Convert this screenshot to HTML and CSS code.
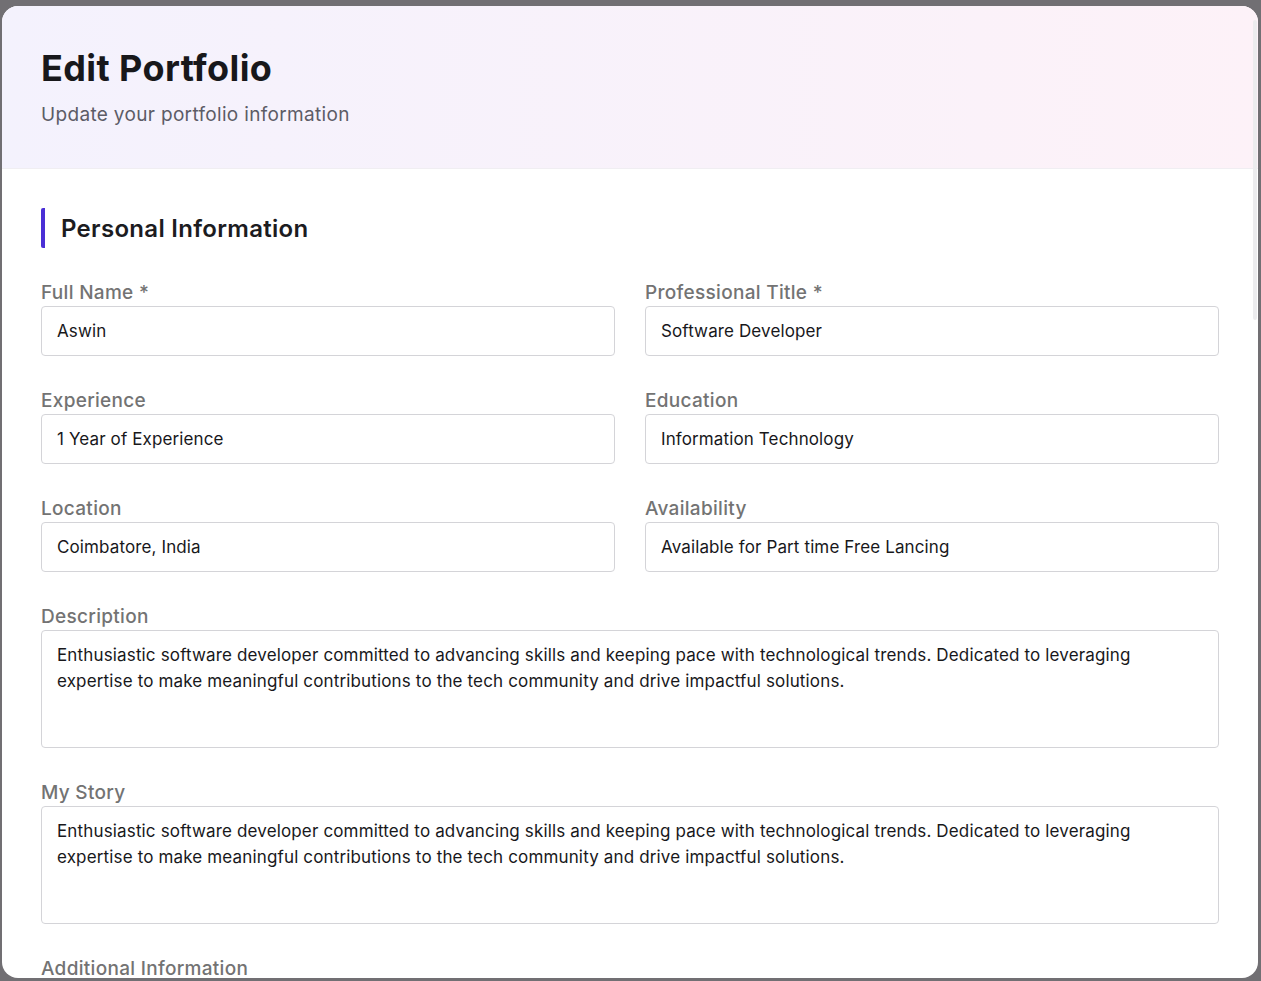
FILE: index.html
```html
<!DOCTYPE html>
<html lang="en">
<head>
<meta charset="utf-8">
<title>Edit Portfolio</title>
<link rel="stylesheet" href="styles.css">
</head>
<body>
<div class="overlay">
  <div class="modal">
    <div class="scroll-thumb"></div>
    <header class="modal-header">
      <h1 class="title">Edit Portfolio</h1>
      <p class="subtitle">Update your portfolio information</p>
    </header>
    <div class="modal-body">
      <h2 class="section-title">Personal Information</h2>
      <div class="grid">
        <div class="field">
          <label class="label">Full Name *</label>
          <div class="input">Aswin</div>
        </div>
        <div class="field">
          <label class="label">Professional Title *</label>
          <div class="input">Software Developer</div>
        </div>
        <div class="field">
          <label class="label">Experience</label>
          <div class="input">1 Year of Experience</div>
        </div>
        <div class="field">
          <label class="label">Education</label>
          <div class="input">Information Technology</div>
        </div>
        <div class="field">
          <label class="label">Location</label>
          <div class="input">Coimbatore, India</div>
        </div>
        <div class="field">
          <label class="label">Availability</label>
          <div class="input">Available for Part time Free Lancing</div>
        </div>
      </div>
      <div class="field">
        <label class="label">Description</label>
        <div class="textarea">Enthusiastic software developer committed to advancing skills and keeping pace with technological trends. Dedicated to leveraging expertise to make meaningful contributions to the tech community and drive impactful solutions.</div>
      </div>
      <div class="field">
        <label class="label">My Story</label>
        <div class="textarea">Enthusiastic software developer committed to advancing skills and keeping pace with technological trends. Dedicated to leveraging expertise to make meaningful contributions to the tech community and drive impactful solutions.</div>
      </div>
      <div class="field">
        <label class="label">Additional Information</label>
        <div class="textarea"></div>
      </div>
    </div>
  </div>
</div>
</body>
</html>
```

FILE: styles.css
```css
* { box-sizing: border-box; }
html, body { margin: 0; padding: 0; height: 100%; }
body {
  background: #716f73;
  font-family: Inter, "Noto Sans", sans-serif;
  overflow: hidden;
}
.overlay {
  padding: 6px 3px 3px 2px;
  height: 981px;
}
.modal {
  position: relative;
  width: 1256px;
  height: 972px;
  background: #ffffff;
  border-radius: 16px;
  overflow: hidden;
}
.scroll-thumb {
  position: absolute;
  right: 1px;
  top: 14px;
  width: 4px;
  height: 300px;
  background: #ececee;
  border-radius: 2px;
}
.modal-header {
  padding: 42px 39px 39px;
  background: linear-gradient(90deg, #f4f2fd 0%, #fdf2f8 100%);
  border-bottom: 1px solid #f0eef2;
}
.title {
  margin: 0;
  font-size: 36px;
  line-height: 40px;
  font-weight: 700;
  color: #18181b;
  letter-spacing: 0.4px;
}
.subtitle {
  margin: 13px 0 0;
  font-size: 19px;
  line-height: 28px;
  color: #5c5c66;
  letter-spacing: 0.33px;
}
.modal-body {
  padding: 39px 39px 40px;
}
.section-title {
  margin: 0 0 30px;
  height: 40px;
  display: flex;
  align-items: center;
  padding-left: 16px;
  border-left: 4px solid #4a2fd6;
  border-radius: 2px;
  font-size: 24px;
  font-weight: 600;
  color: #1c1c1f;
  letter-spacing: 0.3px;
}
.grid {
  display: grid;
  grid-template-columns: 1fr 1fr;
  column-gap: 30px;
}
.field {
  display: flex;
  flex-direction: column;
  margin-bottom: 30px;
}
.label {
  padding-top: 1px;
  font-size: 19px;
  line-height: 27px;
  font-weight: 500;
  color: #737373;
  letter-spacing: 0.3px;
}
.input {
  height: 50px;
  border: 1px solid #d4d4d8;
  border-radius: 4px;
  padding: 0 15px;
  display: flex;
  align-items: center;
  font-size: 17px;
  color: #18181b;
  letter-spacing: 0.12px;
}
.textarea {
  height: 118px;
  border: 1px solid #d4d4d8;
  border-radius: 4px;
  padding: 12px 28px 10px 15px;
  font-size: 17px;
  line-height: 25.5px;
  color: #18181b;
  letter-spacing: 0.15px;
}
```
